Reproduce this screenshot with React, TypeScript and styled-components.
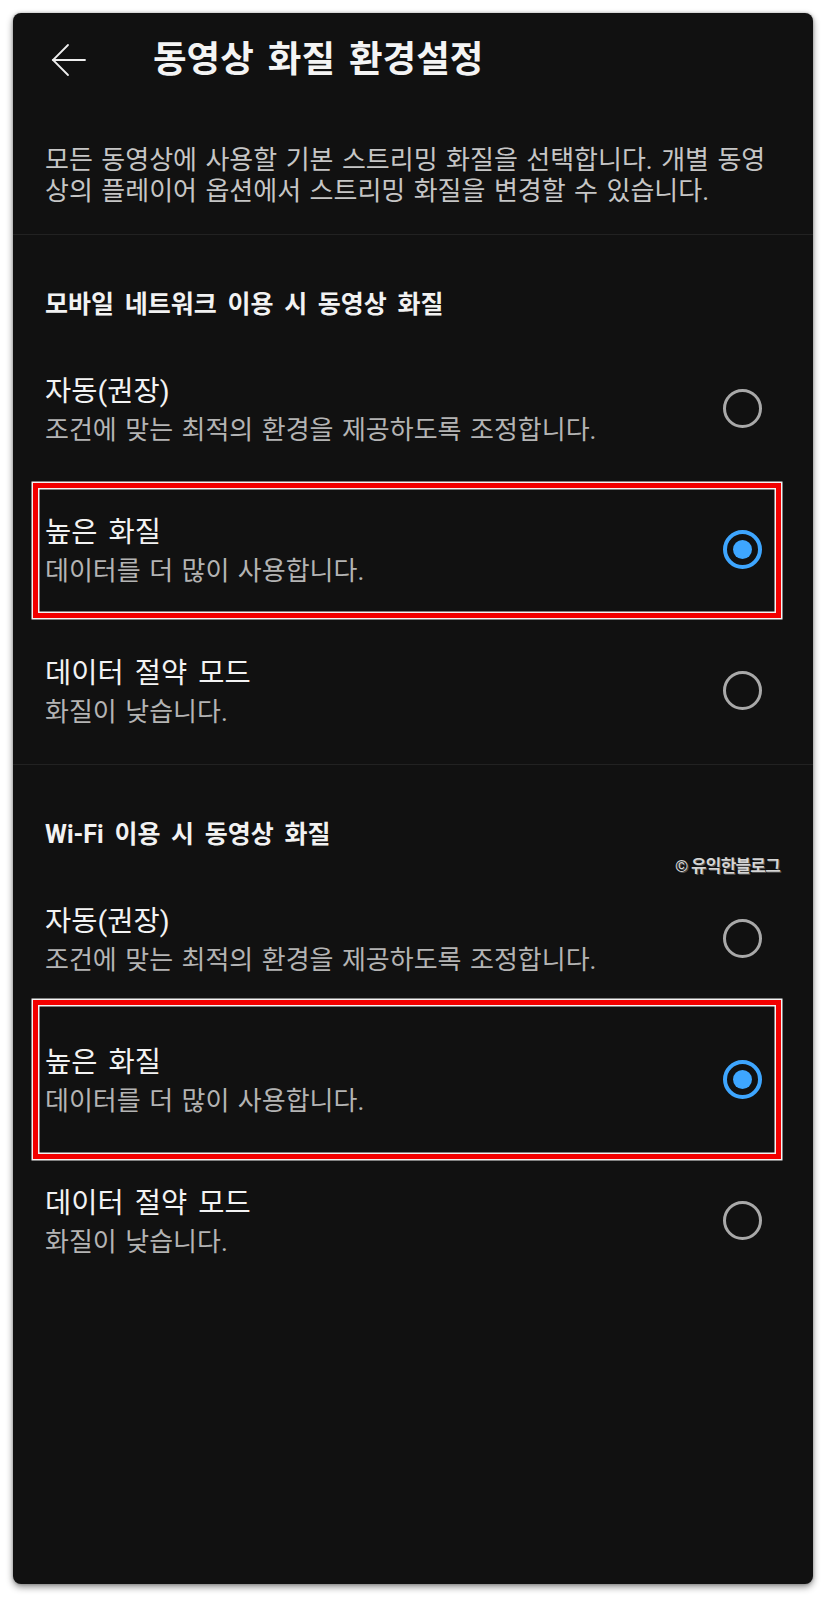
import React from 'react';
import styled, { createGlobalStyle } from 'styled-components';

const GlobalStyle = createGlobalStyle`
  html, body {
    margin: 0;
    padding: 0;
    background: #ffffff;
  }
  body {
    font-family: Roboto, "Noto Sans CJK KR", sans-serif;
  }
`;

const Page = styled.div`
  width: 828px;
  height: 1600px;
  padding: 13px 15px 16px 13px;
  box-sizing: border-box;
`;

const Screen = styled.div`
  width: 800px;
  height: 1571px;
  background: #111111;
  border-radius: 8px;
  box-shadow: 0 3px 7px rgba(0, 0, 0, 0.45), 0 0 3px rgba(0, 0, 0, 0.25);
  overflow: hidden;
  color: #f1f1f1;
`;

const TopBar = styled.header`
  display: flex;
  align-items: center;
  height: 94px;
  padding-left: 38px;
  gap: 66px;
`;

const BackButton = styled.button`
  display: flex;
  align-items: center;
  justify-content: center;
  width: 36px;
  height: 36px;
  padding: 0;
  background: none;
  border: none;
  color: #eeeeee;
`;

const PageTitle = styled.h1`
  margin: 0;
  font-size: 36.5px;
  font-weight: 700;
  line-height: 42px;
  word-spacing: 5px;
  color: #f4f4f4;
`;

const Intro = styled.p`
  margin: 0;
  padding: 38px 32px 27px 32px;
  font-size: 26px;
  line-height: 31px;
  word-spacing: 2px;
  color: #c6c6c6;
  border-bottom: 1px solid #222222;
`;

const Section = styled.section<{ $divider?: boolean }>`
  position: relative;
  border-bottom: ${(p) => (p.$divider ? '1px solid #222222' : 'none')};
  padding-bottom: ${(p) => (p.$divider ? '3px' : '0')};
`;

const SectionTitle = styled.h2`
  margin: 0;
  padding: 53px 32px 16px 32px;
  font-size: 25px;
  font-weight: 700;
  line-height: 34px;
  word-spacing: 4.5px;
  color: #f2f2f2;
`;

const Watermark = styled.span`
  position: absolute;
  top: 87px;
  right: 33px;
  font-size: 17px;
  font-weight: 700;
  letter-spacing: -0.8px;
  color: #d4d4d4;
  text-shadow: 0 0 1px #000, 1px 1px 0 #555;
`;

const OptionRow = styled.label`
  position: relative;
  display: flex;
  align-items: center;
  justify-content: space-between;
  height: 141px;
  padding: 0 51px 0 32px;
  box-sizing: border-box;
`;

const OptionText = styled.div`
  display: flex;
  flex-direction: column;
  padding-top: 4px;
`;

const OptionTitle = styled.span`
  font-size: 28.5px;
  line-height: 34px;
  word-spacing: 4px;
  color: #f3f3f3;
`;

const OptionHint = styled.span`
  margin-top: 4px;
  font-size: 26px;
  line-height: 34px;
  word-spacing: 2px;
  color: #b4b4b4;
`;

const Radio = styled.span<{ $checked?: boolean }>`
  position: relative;
  flex: none;
  width: 39px;
  height: 39px;
  border-radius: 50%;
  box-sizing: border-box;
  border: ${(p) => (p.$checked ? '4px solid #3ea6ff' : '3.5px solid #a9a9a9')};

  &::after {
    content: '';
    position: absolute;
    inset: 6px;
    border-radius: 50%;
    background: #3ea6ff;
    display: ${(p) => (p.$checked ? 'block' : 'none')};
  }
`;

const Highlight = styled.span<{ $top: number; $bottom: number }>`
  position: absolute;
  left: 20px;
  right: 32px;
  top: ${(p) => p.$top}px;
  bottom: ${(p) => p.$bottom}px;
  border: 5px solid #f20000;
  box-shadow: 0 0 0 1.5px #f4f4f4, inset 0 0 0 1.5px #f4f4f4;
  pointer-events: none;
`;

type Option = {
  title: string;
  hint: string;
  checked?: boolean;
  mark?: [number, number];
};

const makeOptions = (mark: [number, number]): Option[] => [
  { title: '자동(권장)', hint: '조건에 맞는 최적의 환경을 제공하도록 조정합니다.' },
  { title: '높은 화질', hint: '데이터를 더 많이 사용합니다.', checked: true, mark },
  { title: '데이터 절약 모드', hint: '화질이 낮습니다.' },
];

const BackArrow = () => (
  <svg width="36" height="34" viewBox="0 0 36 34" fill="none" stroke="currentColor" strokeWidth="1.8" strokeLinecap="round">
    <path d="M2 17 H34" />
    <path d="M17 2 L2 17 L17 32" />
  </svg>
);

const OptionList: React.FC<{ options: Option[] }> = ({ options }) => (
  <>
    {options.map((o) => (
      <OptionRow key={o.title}>
        <OptionText>
          <OptionTitle>{o.title}</OptionTitle>
          <OptionHint>{o.hint}</OptionHint>
        </OptionText>
        <Radio $checked={o.checked} />
        {o.mark && <Highlight $top={o.mark[0]} $bottom={o.mark[1]} />}
      </OptionRow>
    ))}
  </>
);

const App: React.FC = () => {
  return (
    <Page>
      <GlobalStyle />
      <Screen>
        <TopBar>
          <BackButton aria-label="뒤로">
            <BackArrow />
          </BackButton>
          <PageTitle>동영상 화질 환경설정</PageTitle>
        </TopBar>

        <Intro>
          모든 동영상에 사용할 기본 스트리밍 화질을 선택합니다. 개별 동영상의 플레이어 옵션에서 스트리밍 화질을 변경할 수 있습니다.
        </Intro>

        <Section $divider>
          <SectionTitle>모바일 네트워크 이용 시 동영상 화질</SectionTitle>
          <OptionList options={makeOptions([4, 2])} />
        </Section>

        <Section>
          <SectionTitle>Wi-Fi 이용 시 동영상 화질</SectionTitle>
          <Watermark>© 유익한블로그</Watermark>
          <OptionList options={makeOptions([-9, -9])} />
        </Section>
      </Screen>
    </Page>
  );
};

export default App;
